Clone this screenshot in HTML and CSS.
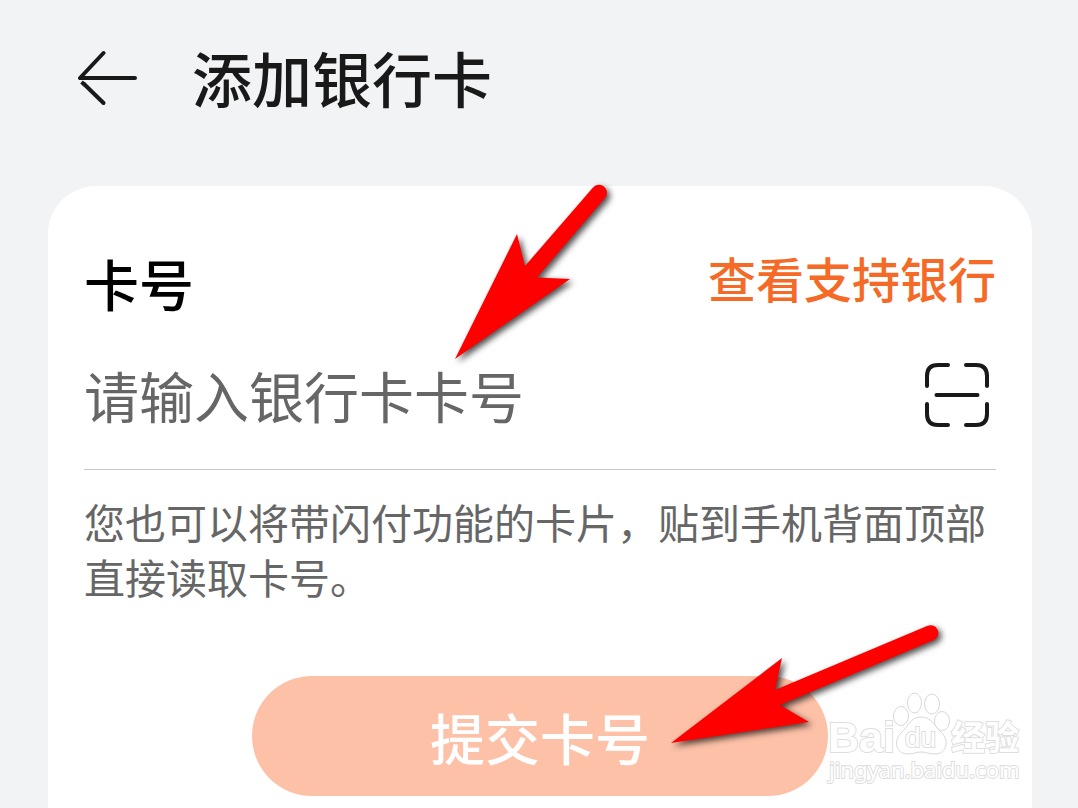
FILE: index.html
```html
<!DOCTYPE html>
<html lang="zh-CN">
<head>
<meta charset="utf-8">
<meta name="viewport" content="width=device-width, initial-scale=1">
<title>添加银行卡</title>
<link rel="stylesheet" href="styles.css">
</head>
<body>
<div class="screen">
  <header class="topbar">
    <button class="back" type="button" aria-label="返回">
      <svg width="60" height="56" viewBox="0 0 60 56" fill="none" stroke="#19191a" stroke-width="4" stroke-linecap="round" stroke-linejoin="round">
        <path d="M25.500 3 2 28H57"/>
        <path stroke-linecap="butt" d="M3.500 32 7 35"/>
        <path d="M6 34 25.500 53"/>
      </svg>
    </button>
    <h1 class="title">添加银行卡</h1>
  </header>
  <main class="card">
    <div class="card-head">
      <label class="label" for="card-number">卡号</label>
      <a class="banks" href="#banks">查看支持银行</a>
    </div>
    <div class="field">
      <input class="number" id="card-number" type="text" inputmode="numeric" placeholder="请输入银行卡卡号">
      <button class="scan" type="button" aria-label="扫描银行卡">
        <svg width="66" height="66" viewBox="0 0 66 66" fill="none" stroke="#19191a" stroke-width="4" stroke-linecap="round">
          <path d="M3 24V14Q3 3 14 3H24M42 3H52Q63 3 63 14V24M63 42V52Q63 63 52 63H42M24 63H14Q3 63 3 52V42M12.500 33H53.500"/>
        </svg>
      </button>
    </div>
    <p class="hint">您也可以将带闪付功能的卡片，贴到手机背面顶部直接读取卡号。</p>
    <button class="submit" type="button">提交卡号</button>
  </main>
  <svg class="pointer pointer-input" width="170" height="190" viewBox="450 178 170 190" aria-hidden="true">
    <path fill="#f00" d="M455 359 517 234 525 266 593 187.500A7.500 7.500 0 0 1 605 198L537 277.500 570 279Z"/>
  </svg>
  <svg class="pointer pointer-submit" width="290" height="140" viewBox="660 616 290 140" aria-hidden="true">
    <path fill="#f00" d="M671 743 782 658 775 690 927 626A7.500 7.500 0 0 1 934 640L780 705 809 722Z"/>
  </svg>
  <svg class="watermark" width="210" height="100" viewBox="820 690 210 100" aria-hidden="true">
    <g fill="#fff" stroke="#d8d8d8" stroke-width="1">
      <text class="wm-logo" x="828" y="752">Bai</text>
      <ellipse cx="901" cy="716" rx="7.500" ry="9.500"/>
      <ellipse cx="914.500" cy="703" rx="7" ry="10"/>
      <ellipse cx="932" cy="704" rx="7.500" ry="10"/>
      <ellipse cx="942" cy="721" rx="7.500" ry="9.500"/>
      <path d="M921 717C932 717 934 726 941 732C950 740 947 754 935 754C929 754 926 752 921 752C916 752 914 754 908 754C896 754 893 741 901 733C909 726 910 717 921 717Z"/>
      <text class="wm-du" x="905" y="747">du</text>
      <text class="wm-name" x="951" y="750">经验</text>
      <text class="wm-url" x="829" y="778">jingyan.baidu.com</text>
    </g>
  </svg>
</div>
</body>
</html>
```
FILE: styles.css
```css
* {
  box-sizing: border-box;
}

body {
  margin: 0;
  background: #f1f3f5;
  color: #19191a;
  font-family: "Noto Sans CJK SC", "Noto Sans", sans-serif;
}

button,
input {
  border: 0;
  padding: 0;
  background: none;
  color: inherit;
  font: inherit;
}

svg {
  display: block;
}

.screen {
  position: relative;
  display: flex;
  flex-direction: column;
  height: 100vh;
  overflow: hidden;
}

.topbar {
  display: flex;
  flex: none;
  align-items: center;
  gap: 54px;
  height: 156px;
  padding: 0 78px;
}

.title {
  margin: 0;
  padding-bottom: 2px;
  font-size: 60px;
  font-weight: 500;
  line-height: 80px;
}

.card {
  flex: 1 0 auto;
  margin: 30px 46px 0 48px;
  padding: 60px 36px 12px;
  border-radius: 48px 48px 0 0;
  background: #fff;
}

.card-head {
  display: flex;
  align-items: flex-start;
  justify-content: space-between;
  height: 76px;
}

.label {
  color: #000;
  font-size: 55px;
  font-weight: 500;
  line-height: 72px;
}

.banks {
  color: #f56a26;
  font-size: 48px;
  font-weight: 500;
  line-height: 62px;
  text-decoration: none;
}

.field {
  display: flex;
  align-items: center;
  height: 148px;
  padding: 0 6px 2px 0;
  border-bottom: 1px solid #c8c8c8;
}

.number {
  flex: 1;
  min-width: 0;
  height: 80px;
  padding-bottom: 2px;
  font-size: 55px;
  outline: none;
}

.number::placeholder {
  color: #666;
  opacity: 1;
}

.hint {
  margin: 24px 0 0;
  color: #666;
  font-size: 41px;
  line-height: 55px;
}

.submit {
  display: block;
  width: 576px;
  max-width: 100%;
  height: 120px;
  margin: 72px auto 0;
  border-radius: 60px;
  background: #fdc1a8;
  color: #fff;
  font-size: 55px;
  font-weight: 500;
}

.pointer {
  position: absolute;
  filter: drop-shadow(3px 3px 3px rgba(0, 0, 0, 0.7));
}

.pointer-input {
  top: 178px;
  left: 450px;
}

.pointer-submit {
  top: 616px;
  left: 660px;
}

.watermark {
  position: absolute;
  top: 690px;
  left: 820px;
}

.watermark text {
  stroke: #dedede;
  stroke-width: 2px;
  paint-order: stroke;
}

.wm-logo,
.wm-du {
  font-family: "Liberation Sans", Arial, sans-serif;
}

.wm-logo {
  font-size: 43px;
  font-weight: 700;
}

.wm-du {
  font-size: 28px;
}

.wm-name {
  font-size: 34px;
  font-weight: 700;
}

.wm-url {
  font-family: "Noto Sans", "Open Sans", sans-serif;
  font-size: 22px;
}
```
